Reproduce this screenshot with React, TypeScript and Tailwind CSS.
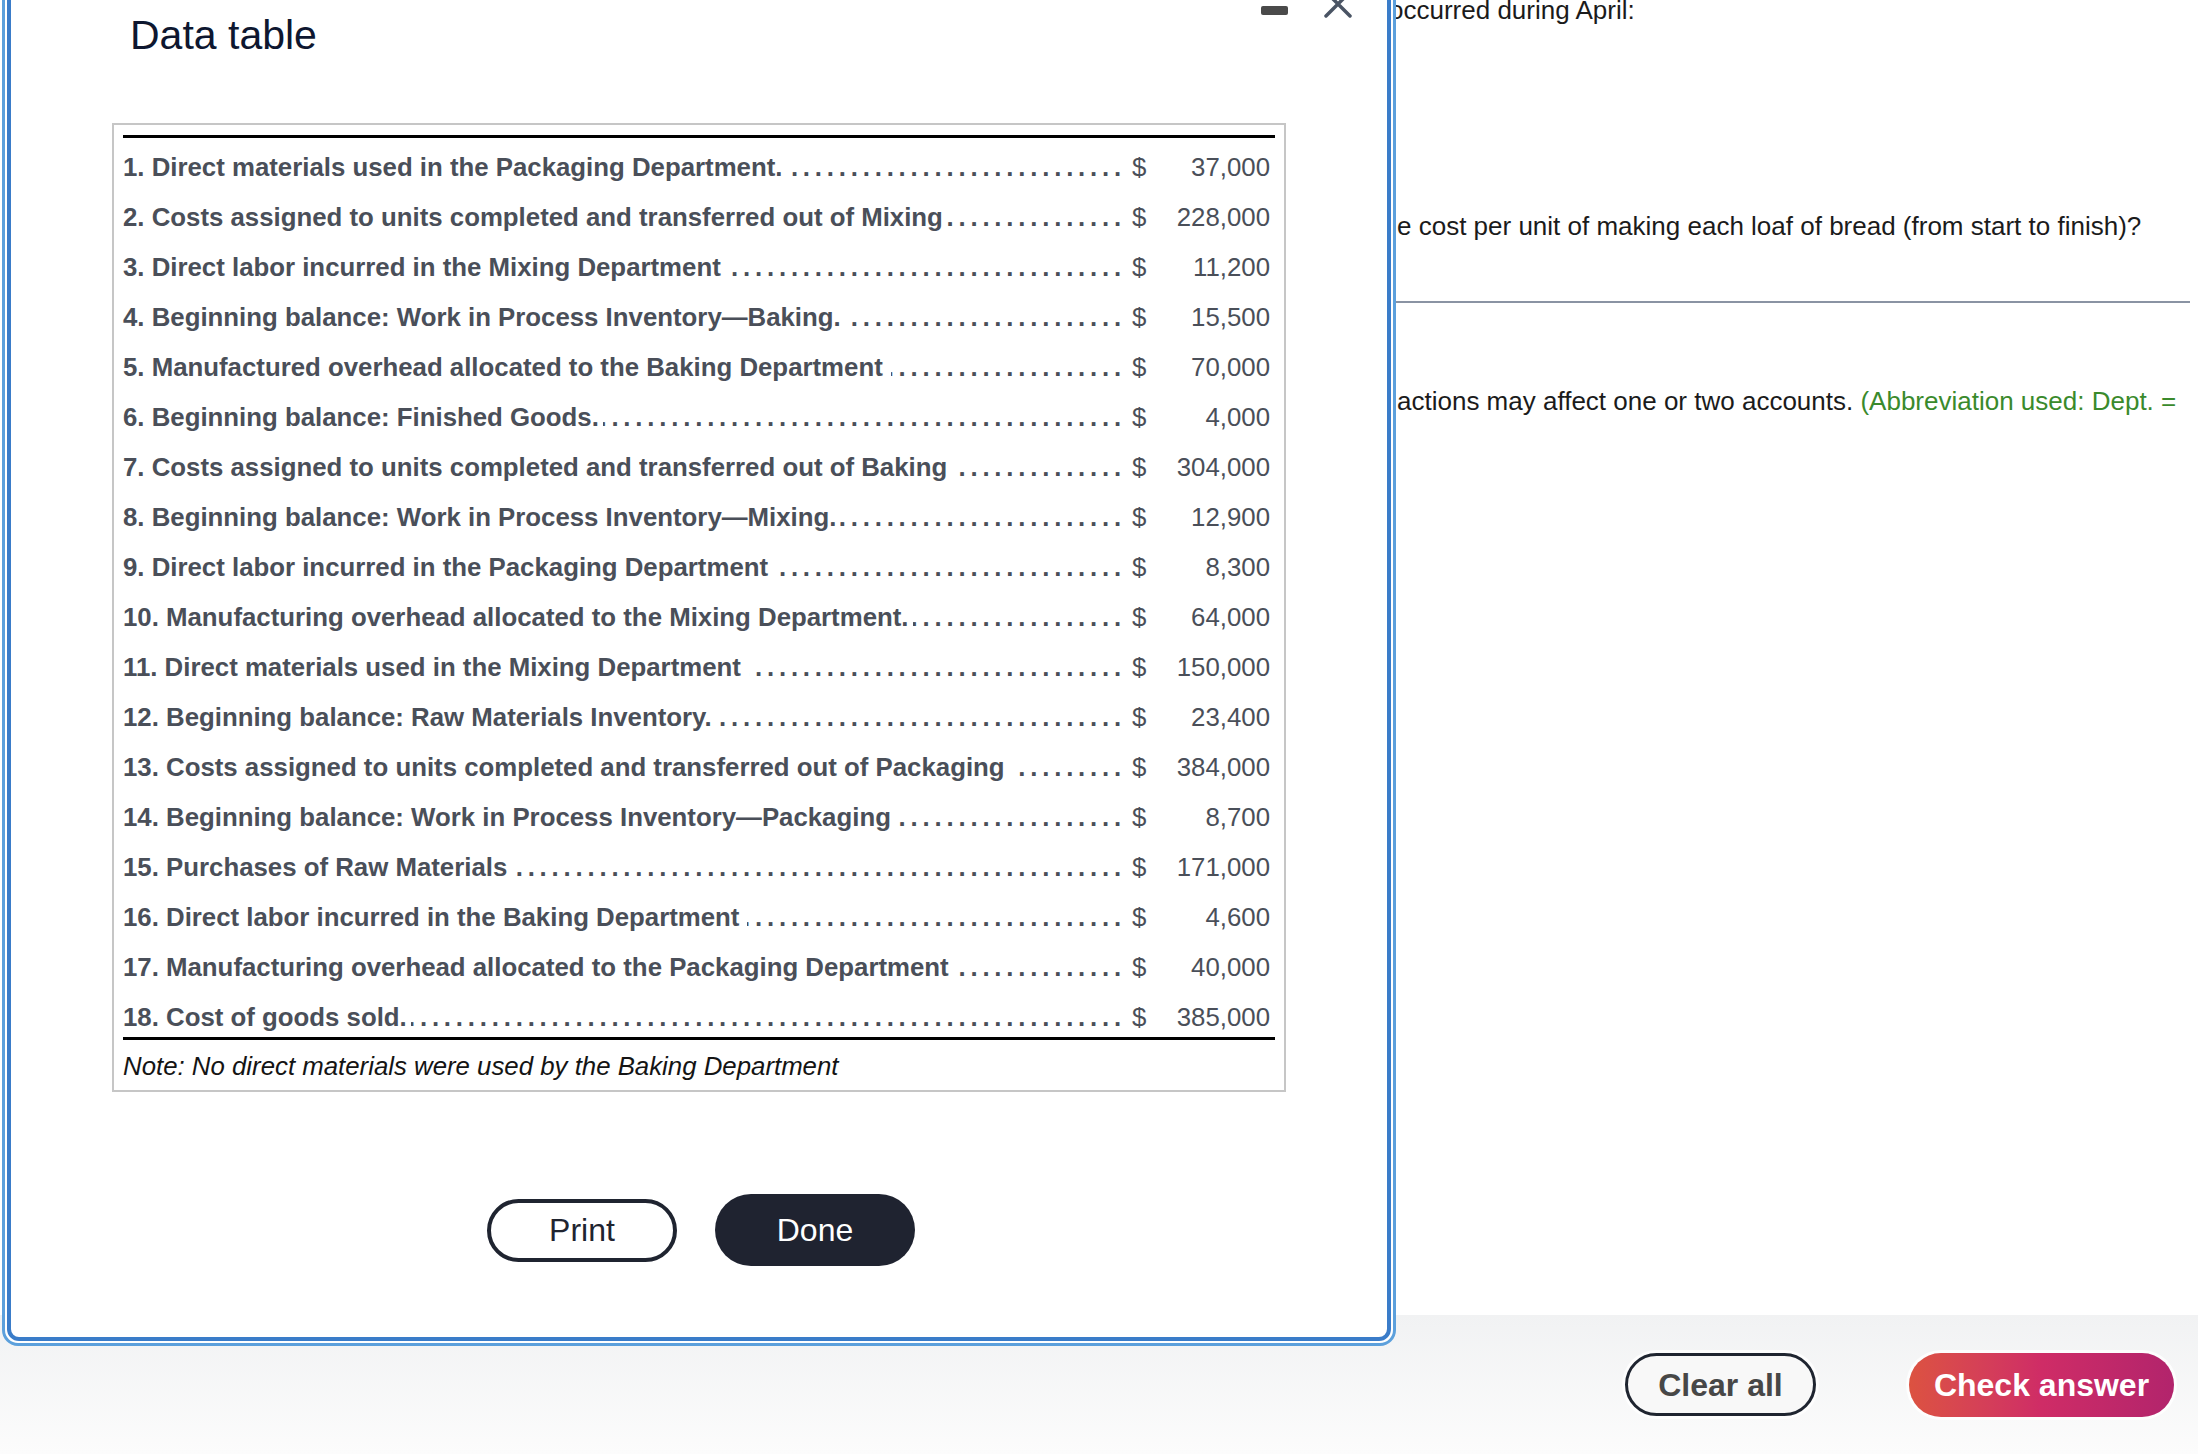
import React from "react";

type Row = { label: string; amount: string; spaced: boolean };

const rows: Row[] = [
  { label: "1. Direct materials used in the Packaging Department.", amount: "37,000", spaced: false },
  { label: "2. Costs assigned to units completed and transferred out of Mixing", amount: "228,000", spaced: false },
  { label: "3. Direct labor incurred in the Mixing Department", amount: "11,200", spaced: true },
  { label: "4. Beginning balance: Work in Process Inventory\u2014Baking.", amount: "15,500", spaced: false },
  { label: "5. Manufactured overhead allocated to the Baking Department", amount: "70,000", spaced: true },
  { label: "6. Beginning balance: Finished Goods.", amount: "4,000", spaced: false },
  { label: "7. Costs assigned to units completed and transferred out of Baking", amount: "304,000", spaced: true },
  { label: "8. Beginning balance: Work in Process Inventory\u2014Mixing.", amount: "12,900", spaced: false },
  { label: "9. Direct labor incurred in the Packaging Department", amount: "8,300", spaced: true },
  { label: "10. Manufacturing overhead allocated to the Mixing Department.", amount: "64,000", spaced: false },
  { label: "11. Direct materials used in the Mixing Department", amount: "150,000", spaced: true },
  { label: "12. Beginning balance: Raw Materials Inventory.", amount: "23,400", spaced: false },
  { label: "13. Costs assigned to units completed and transferred out of Packaging", amount: "384,000", spaced: true },
  { label: "14. Beginning balance: Work in Process Inventory\u2014Packaging", amount: "8,700", spaced: true },
  { label: "15. Purchases of Raw Materials", amount: "171,000", spaced: true },
  { label: "16. Direct labor incurred in the Baking Department", amount: "4,600", spaced: true },
  { label: "17. Manufacturing overhead allocated to the Packaging Department", amount: "40,000", spaced: true },
  { label: "18. Cost of goods sold.", amount: "385,000", spaced: false },
];

const DOTS = ".".repeat(120);

function DataRow({ row, last }: { row: Row; last: boolean }) {
  return (
    <div className={last ? "flex h-[45px] items-center pt-[5px]" : "flex h-[50px] items-center"}>
      <span className="shrink-0 whitespace-nowrap font-bold leading-[30px]">{row.label}</span>
      <div className={row.spaced ? "ml-[8px] flex min-w-0 flex-1 justify-end overflow-hidden" : "ml-[4px] flex min-w-0 flex-1 justify-end overflow-hidden"}>
        <span className="shrink-0 whitespace-nowrap font-bold tracking-[4.8px] leading-[30px]">{DOTS}</span>
      </div>
      <span className="ml-[6px] w-[14px] shrink-0 leading-[30px]">$</span>
      <span className="w-[124px] shrink-0 text-right leading-[30px]">{row.amount}</span>
      <span className="w-[5px] shrink-0" />
    </div>
  );
}

export default function App() {
  return (
    <div className="relative h-[1454px] w-[2198px] overflow-hidden bg-white font-['Liberation_Sans',Arial,sans-serif]">
      {/* Underlying page */}
      <div className="flex h-full flex-col">
        <div className="h-[1315px] shrink-0 pl-[1396px] text-[26px] text-[#1b1b1b]">
          <div className="mt-[-5px] h-[30px] overflow-hidden whitespace-nowrap leading-[30px]">
            <span className="ml-[-7px]">occurred during April:</span>
          </div>
          <div className="mt-[186px] h-[30px] overflow-hidden whitespace-nowrap leading-[30px]">
            <span className="ml-[1px]">e cost per unit of making each loaf of bread (from start to finish)?</span>
          </div>
          <div className="mt-[60px] mr-[8px] h-[2px] bg-[#8a93a3]" />
          <div className="mt-[83px] h-[30px] overflow-hidden whitespace-nowrap leading-[30px]">
            <span className="ml-[1px]">actions may affect one or two accounts. </span>
            <span className="text-[#3a8a2c]">(Abbreviation used: Dept. =</span>
          </div>
        </div>
        <div className="flex flex-1 items-center justify-end bg-linear-to-b from-[#f1f2f3] to-[#fcfcfc] pr-[24px]">
          <button className="flex h-[63px] w-[191px] items-center justify-center rounded-full border-[3px] border-[#1f2530] bg-[#f8f8f8] text-[32px] font-bold text-[#474747] shadow-[0_0_0_3px_rgba(255,255,255,0.8)]">
            Clear all
          </button>
          <button className="ml-[93px] flex h-[64px] w-[265px] items-center justify-center rounded-full bg-linear-to-r from-[#dc5240] via-[#cf2c66] to-[#b2246c] text-[32px] font-bold text-white shadow-[0_0_0_3px_rgba(255,255,255,0.8)]">
            Check answer
          </button>
        </div>
      </div>

      {/* Modal overlay */}
      <div className="absolute left-[2px] top-[-20px] flex h-[1366px] w-[1394px] rounded-[16px] border-[3px] border-[#5ca0dc] bg-white p-[2px]">
        <div className="relative flex flex-1 flex-col rounded-[12px] border-[4px] border-[#3a7cc9] bg-white">
          <div className="absolute left-[1250px] top-[17px] h-[9px] w-[27px] rounded-[2px] bg-[#4a4a4a]" />
          <svg className="absolute left-[1313px] top-[1px]" width="28" height="28" viewBox="0 0 28 28">
            <path d="M2 2 L26 26 M26 2 L2 26" stroke="#4a5464" strokeWidth="3.5" strokeLinecap="round" fill="none" />
          </svg>

          <h1 className="ml-[119px] mt-[26px] h-[41px] text-[41px] font-normal leading-none text-[#0e1730]">Data table</h1>

          <div className="ml-[101px] mt-[67px] w-[1174px] border-2 border-[#c6c6c6] px-[9px] pb-[9px] pt-[10px] text-[25.8px] text-[#4a4f59]">
            <div className="h-[3px] bg-black" />
            <div className="mt-[4px]">
              {rows.map((r, i) => (
                <DataRow key={i} row={r} last={i === rows.length - 1} />
              ))}
            </div>
            <div className="h-[3px] bg-black" />
            <div className="mt-[11px] h-[30px] whitespace-nowrap italic leading-[30px] text-[#141414]">
              Note: No direct materials were used by the Baking Department
            </div>
          </div>

          <div className="ml-[4px] mt-[102px] flex items-center justify-center gap-[38px]">
            <button className="flex h-[63px] w-[190px] items-center justify-center rounded-full border-[4px] border-[#1f2430] bg-white text-[32px] text-[#1f2430]">
              Print
            </button>
            <button className="flex h-[72px] w-[200px] items-center justify-center rounded-full bg-[#1f2330] text-[32px] text-white">
              Done
            </button>
          </div>
        </div>
      </div>
    </div>
  );
}
